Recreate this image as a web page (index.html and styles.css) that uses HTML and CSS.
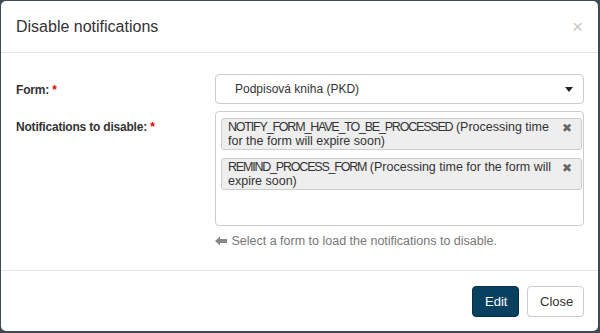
FILE: index.html
```html
<!DOCTYPE html>
<html lang="en">

<head>
    <meta charset="UTF-8">
    <meta name="viewport" content="width=device-width, initial-scale=1.0">
    <title>Disable notifications</title>
    <link rel="stylesheet" href="styles.css">
</head>

<body>

    <div class="modal">
        <div class="modal-header">
            <h4 class="modal-title">Disable notifications</h4>
            <button class="close" type="button">&times;</button>
        </div>

        <div class="modal-body">
            <div class="form-row">
                <label class="form-label">Form: <span class="required">*</span></label>
                <div class="form-field">
                    <div class="select">
                        <span>Podpisová kniha (PKD)</span>
                        <span class="caret"></span>
                    </div>
                </div>
            </div>

            <div class="form-row">
                <label class="form-label">Notifications to disable: <span class="required">*</span></label>
                <div class="form-field">
                    <div class="multiselect">
                        <div class="tag">
                            <span class="tag-text"><span class="code">NOTIFY_FORM_HAVE_TO_BE_PROCESSED</span> (Processing time for the form will expire soon)</span>
                            <span class="tag-remove">&#10006;</span>
                        </div>
                        <div class="tag">
                            <span class="tag-text"><span class="code">REMIND_PROCESS_FORM</span> (Processing time for the form will expire soon)</span>
                            <span class="tag-remove">&#10006;</span>
                        </div>
                    </div>
                    <p class="help">
                        <svg class="arrow" width="12" height="10" viewBox="0 0 12 10"><path d="M0 5 L5 0.5 L5 3 L12 3 L12 7 L5 7 L5 9.5 Z" fill="#888"/></svg>
                        Select a form to load the notifications to disable.
                    </p>
                </div>
            </div>
        </div>

        <div class="modal-footer">
            <button class="btn btn-primary" type="button">Edit</button>
            <button class="btn btn-default" type="button">Close</button>
        </div>
    </div>

</body>

</html>
```

FILE: styles.css
```css
html,
body {
    height: 100%;
}

body {
    font-family: "Liberation Sans", Arial, sans-serif;
    background-color: #3f4a52;
    margin: 0;
    padding: 1px 2px 2px 1px;
    box-sizing: border-box;
    color: #333;
}

.modal {
    background: white;
    border-radius: 5px;
    height: 100%;
    display: flex;
    flex-direction: column;
}

.modal-header {
    display: flex;
    align-items: center;
    justify-content: space-between;
    height: 51px;
    padding: 0 15px 0 15px;
    border-bottom: 1px solid #e5e5e5;
}

.modal-title {
    margin: 0;
    font-size: 16px;
    font-weight: normal;
    color: #333;
}

.close {
    background: none;
    border: none;
    padding: 0;
    font-size: 19px;
    line-height: 1;
    color: #c4c4c4;
    cursor: pointer;
}

.modal-body {
    padding: 21px 14px 0 15px;
    height: 196px;
}

.form-row {
    display: flex;
    margin-bottom: 7px;
}

.form-label {
    width: 199px;
    font-size: 12px;
    font-weight: bold;
    letter-spacing: -0.2px;
    padding-top: 9px;
}

.required {
    color: #e00;
}

.form-field {
    flex: 1;
}

.select {
    display: flex;
    align-items: center;
    justify-content: space-between;
    height: 28px;
    padding: 0 10px 0 19px;
    border: 1px solid #ccc;
    border-radius: 4px;
    font-size: 12px;
}

.caret {
    width: 0;
    height: 0;
    border-left: 4px solid transparent;
    border-right: 4px solid transparent;
    border-top: 5px solid #222;
}

.multiselect {
    height: 107px;
    padding: 6px 1px 0 5px;
    border: 1px solid #ccc;
    border-radius: 4px;
}

.tag {
    display: flex;
    justify-content: space-between;
    align-items: flex-start;
    margin-bottom: 8px;
    padding: 1px 10px 1px 6px;
    background-color: #eeeeee;
    border: 1px solid #cccccc;
    border-radius: 3px;
    font-size: 12.5px;
    line-height: 14px;
}

.tag-text {
    flex: 1;
    margin-right: 2px;
}

.code {
    letter-spacing: -1.2px;
}

.tag-remove {
    width: 9px;
    color: #666;
    font-size: 12px;
    line-height: 14px;
    margin-top: 1px;
}

.help {
    margin: 8px 0 0;
    font-size: 12.5px;
    color: #777;
}

.arrow {
    vertical-align: -1px;
    margin-right: 1px;
}

.modal-footer {
    display: flex;
    justify-content: flex-end;
    gap: 8px;
    padding: 15px 14px 0 0;
    border-top: 1px solid #e5e5e5;
}

.btn {
    height: 31px;
    padding: 0 12px;
    font-family: inherit;
    font-size: 13px;
    border-radius: 4px;
    cursor: pointer;
}

.btn-primary {
    background-color: #08405f;
    border: 1px solid #062f47;
    color: white;
    width: 47px;
}

.btn-default {
    background-color: white;
    border: 1px solid #ccc;
    color: #333;
    width: 57px;
}
```
